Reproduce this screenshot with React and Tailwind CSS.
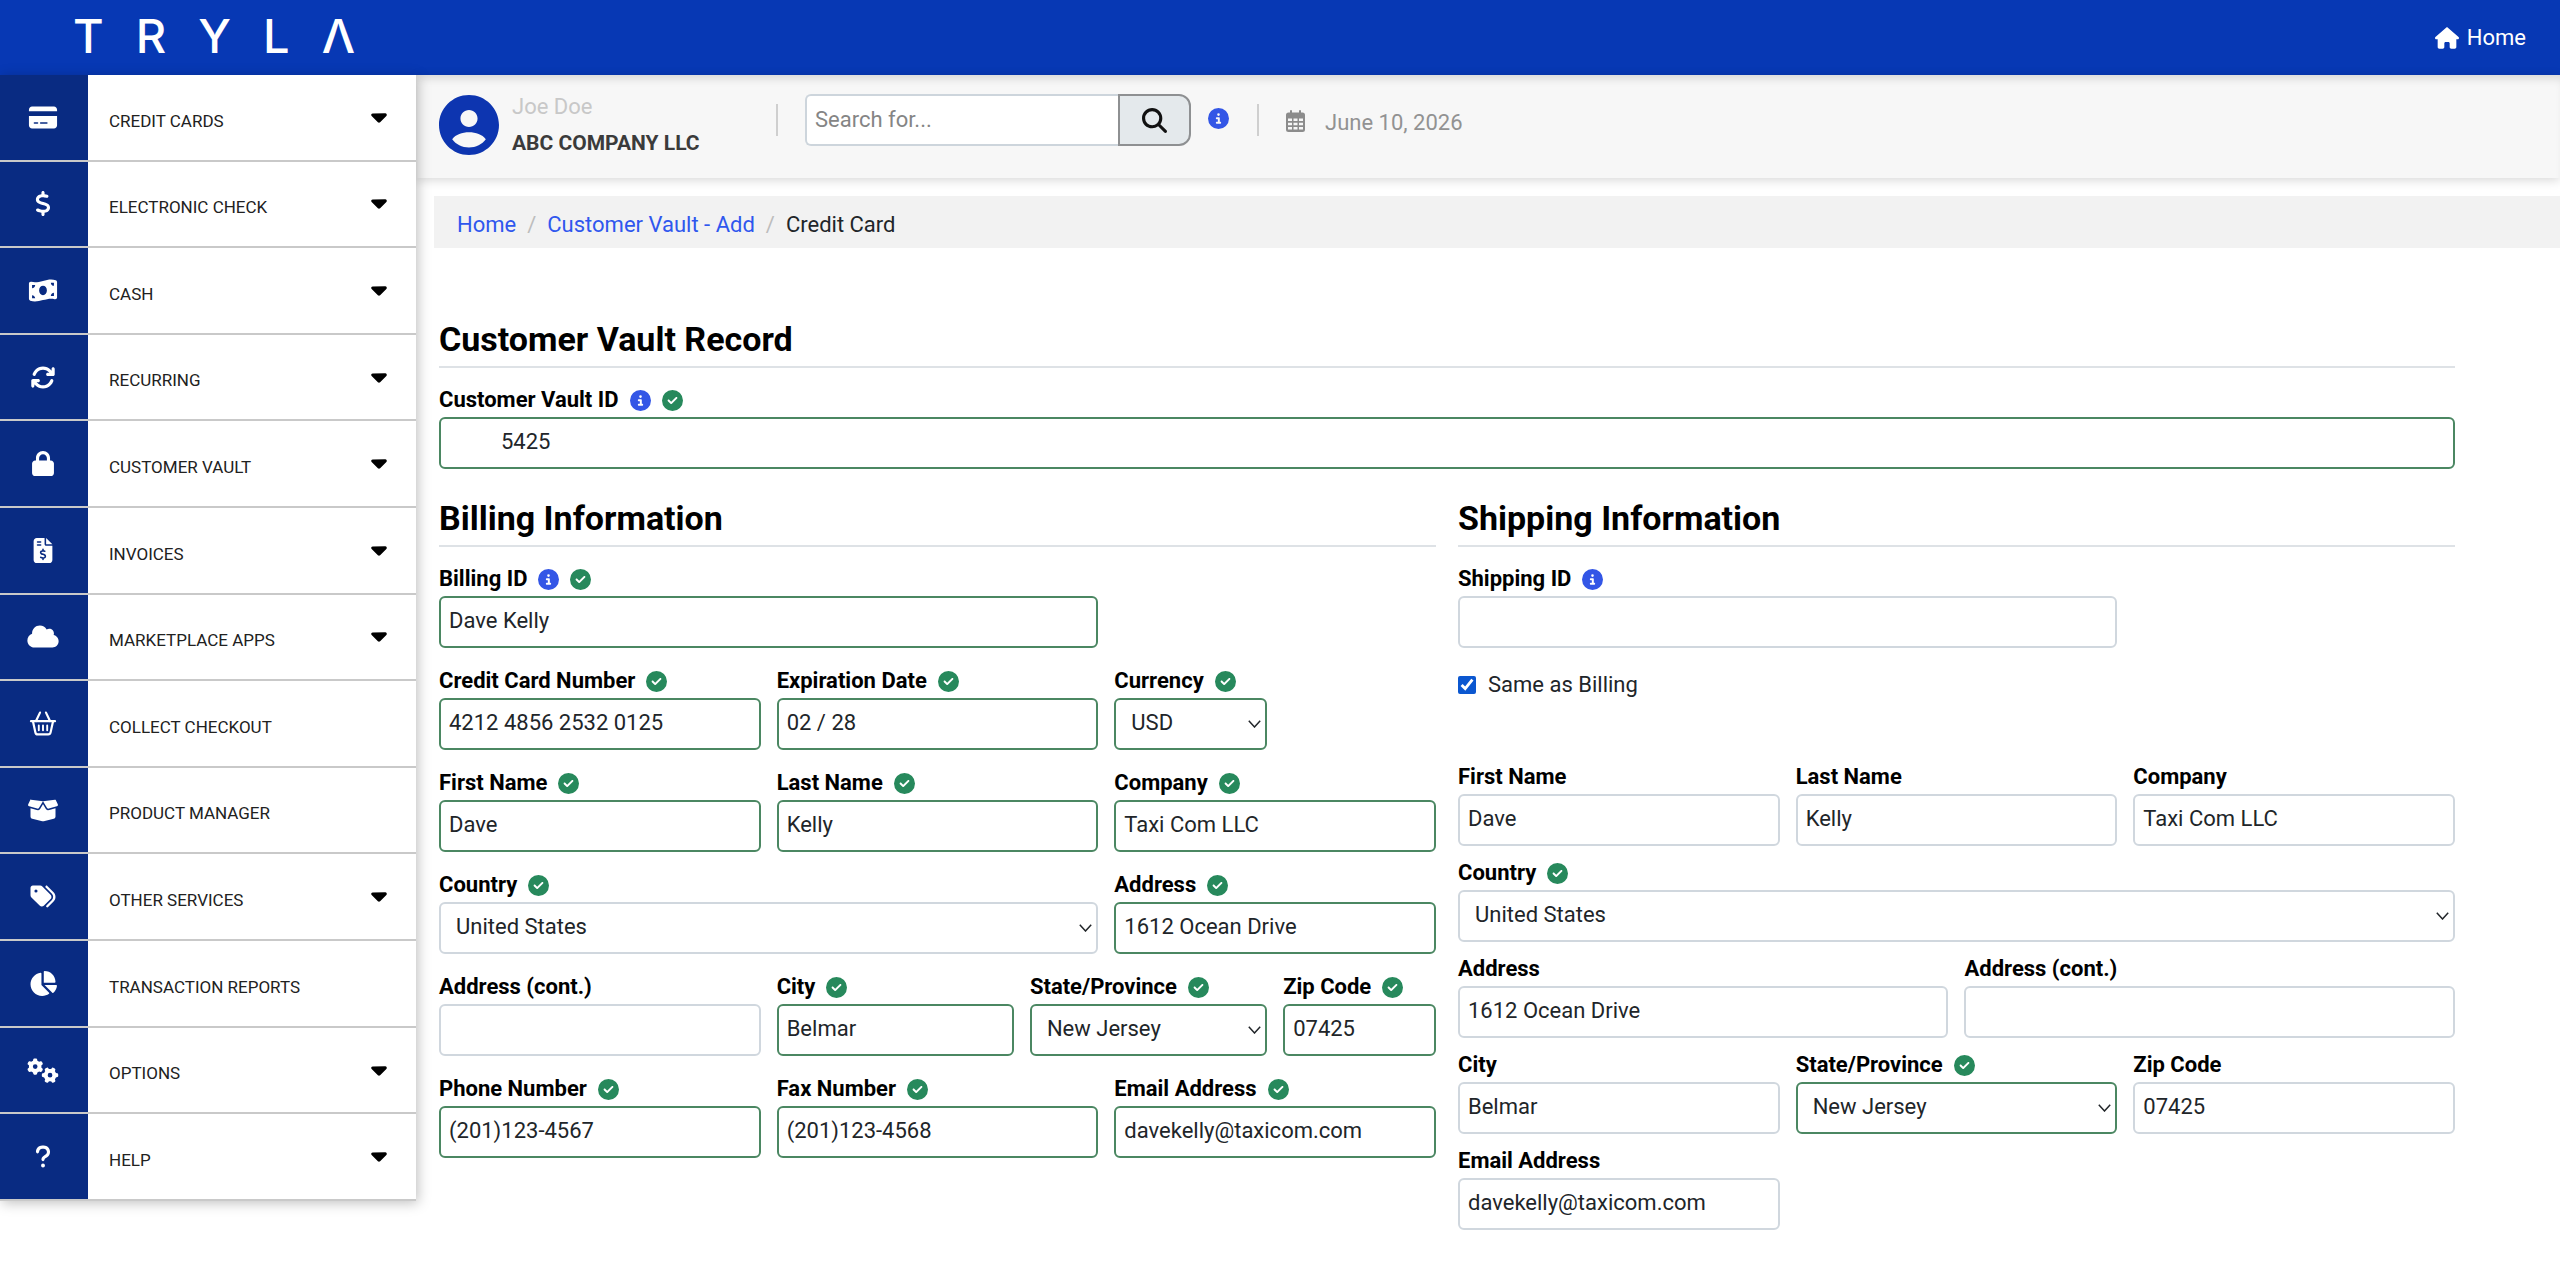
import React, { useState } from 'react';
import clsx from 'clsx';
import {
    FaArrowsRotate,
    FaBoxOpen,
    FaCaretDown,
    FaChartPie,
    FaCircleCheck,
    FaCircleInfo,
    FaCloud,
    FaCreditCard,
    FaDollarSign,
    FaFileInvoiceDollar,
    FaGears,
    FaHouse,
    FaLock,
    FaMagnifyingGlass,
    FaMoneyBillWave,
    FaQuestion,
    FaTags,
} from 'react-icons/fa6';

function BasketIcon({ className }) {
    return (
        <svg viewBox="0 0 28 25" fill="none" stroke="currentColor" strokeLinecap="round" strokeLinejoin="round" className={className}>
            <path d="M2 10.2h24" strokeWidth="2.2" />
            <path d="M7 10 11 1.6M21 10 17 1.6" strokeWidth="2.2" />
            <path d="M4 10.5 6.4 21.4Q6.8 23.4 8.8 23.4H19.2Q21.2 23.4 21.6 21.4L24 10.5" strokeWidth="2.2" />
            <path d="M9.8 14.4v4.8M14 14.4v4.8M18.2 14.4v4.8" strokeWidth="1.9" />
        </svg>
    );
}

function CalendarIcon({ className }) {
    return (
        <svg viewBox="0 0 19 22" width="19" height="22" fill="currentColor" className={className}>
            <rect x="4" y="0" width="2" height="5" rx="1" />
            <rect x="13" y="0" width="2" height="5" rx="1" />
            <path fillRule="evenodd" d="M2.5 2.5h14A2.5 2.5 0 0 1 19 5v14.500a2.500 2.500 0 0 1-2.500 2.500h-14A2.500 2.500 0 0 1 0 19.500V5a2.500 2.500 0 0 1 2.500-2.500zM2 8.500v2.500h4V8.500zM7.500 8.500v2.500h4V8.500zM13 8.500v2.500h4V8.500zM2 12.800v2.500h4v-2.500zM7.500 12.800v2.500h4v-2.500zM13 12.800v2.500h4v-2.500zM2 17.100v2.500h4v-2.500zM7.500 17.100v2.500h4v-2.500zM13 17.100v2.500h4v-2.500z" />
        </svg>
    );
}

function Avatar() {
    return (
        <svg viewBox="2 2 20 20" className="w-15 h-15 shrink-0 text-[#0d35b0]" fill="currentColor">
            <path d="M12 2C6.480 2 2 6.480 2 12s4.480 10 10 10 10-4.480 10-10S17.520 2 12 2zm0 5c1.600 0 2.850 1.300 2.850 2.850S13.600 12.700 12 12.700 9.150 11.400 9.150 9.850 10.400 7 12 7zm0 12.500c-2.300 0-4.400-1.050-5.600-2.750 1.200-1.650 3.300-2.350 5.600-2.350s4.400.7 5.600 2.350c-1.200 1.700-3.300 2.750-5.600 2.750z" />
        </svg>
    );
}

const MENU = [
    { label: 'CREDIT CARDS', icon: FaCreditCard, open: true },
    { label: 'ELECTRONIC CHECK', icon: FaDollarSign, open: true },
    { label: 'CASH', icon: FaMoneyBillWave, open: true },
    { label: 'RECURRING', icon: FaArrowsRotate, open: true },
    { label: 'CUSTOMER VAULT', icon: FaLock, open: true },
    { label: 'INVOICES', icon: FaFileInvoiceDollar, open: true },
    { label: 'MARKETPLACE APPS', icon: FaCloud, open: true },
    { label: 'COLLECT CHECKOUT', icon: BasketIcon },
    { label: 'PRODUCT MANAGER', icon: FaBoxOpen },
    { label: 'OTHER SERVICES', icon: FaTags, open: true },
    { label: 'TRANSACTION REPORTS', icon: FaChartPie },
    { label: 'OPTIONS', icon: FaGears, open: true },
    { label: 'HELP', icon: FaQuestion, open: true },
];

const SPANS = {
    2: 'col-span-2',
    3: 'col-span-3',
    4: 'col-span-4',
    6: 'col-span-6',
    8: 'col-span-8',
    12: 'col-span-12',
};

function Field({ id, label, value = '', span = 4, info, checked, valid = checked, select, indent }) {
    const [val, setVal] = useState(value);
    const box = clsx(
        'w-full h-[52px] pb-1 rounded-md border-2 bg-white text-[22px] text-[#212529] outline-none',
        valid ? 'border-[#4b8762]' : 'border-[#d0d7de]'
    );

    return (
        <div className={SPANS[span]}>
            <div className="flex items-center gap-[11px] h-[34px]">
                <label htmlFor={id} className="font-bold text-black leading-[34px]">{label}</label>
                {info && <FaCircleInfo className="w-[21px] h-[21px] text-[#3356e6]" />}
                {checked && <FaCircleCheck className="w-[21px] h-[21px] text-[#27895c]" />}
            </div>
            {select ? (
                <div className="relative">
                    <select id={id} value={val} onChange={(e) => setVal(e.target.value)} className={clsx(box, 'appearance-none pl-[15px] pr-8')}>
                        <option>{value}</option>
                    </select>
                    <svg viewBox="0 0 13 8" className="absolute right-1.5 top-[22px] w-[13px] h-2 pointer-events-none" fill="none" stroke="#212529" strokeWidth="1.5">
                        <path d="M.8.8 6.500 7 12.200.8" />
                    </svg>
                </div>
            ) : (
                <input id={id} type="text" value={val} onChange={(e) => setVal(e.target.value)} className={clsx(box, indent ? 'pl-15' : 'pl-2')} />
            )}
        </div>
    );
}

function Heading({ children }) {
    return (
        <h2 className="text-[34px] leading-[42px] font-bold text-black pb-1.5 border-b-2 border-[#dee2e6] mb-[15px]">{children}</h2>
    );
}

function Sidebar() {
    return (
        <nav className="w-[416px] min-h-[89vh] shrink-0 self-start flex flex-col bg-white shadow-[2px_2px_12px_rgba(0,0,0,0.25)] z-10">
            {MENU.map(({ label, icon: Icon, open }) => (
                <a key={label} href="#" className="flex-1 flex items-stretch border-b-2 border-[#c9c9c9]">
                    <span className="w-22 flex items-center justify-center bg-[#092b82] text-white pr-[3px]">
                        <Icon className="w-8 h-[25px]" />
                    </span>
                    <span className="flex-1 flex items-center justify-between pl-[21px] pr-[29px]">
                        <span className="text-[17px] text-[#212121] pt-2">{label}</span>
                        {open && <FaCaretDown className="w-4 h-[25px] text-black mb-0.5" />}
                    </span>
                </a>
            ))}
        </nav>
    );
}

function TopBar() {
    return (
        <header className="h-[75px] flex items-center justify-between bg-[#0738b4] pl-[73px] pr-[34px] text-white">
            <a href="#" aria-label="TRYLA" className="w-[282px] pb-1 flex justify-between font-[Inter,sans-serif] text-[47px] leading-none font-medium">
                {['T', 'R', 'Y', 'L', 'Λ'].map((c) => (
                    <span key={c}>{c}</span>
                ))}
            </a>
            <a href="#" className="flex items-center gap-2">
                <FaHouse className="w-6 h-[22px]" />
                <span>Home</span>
            </a>
        </header>
    );
}

function UserBar() {
    return (
        <div className="h-[103px] flex items-start pt-3.5 pl-[23px] bg-[#f7f7f7] shadow-[0_2px_10px_rgba(0,0,0,0.16),inset_0_8px_8px_-4px_rgba(0,0,0,0.12)]">
            <div className="w-[337px] flex items-center gap-[13px]">
                <Avatar />
                <div className="leading-9">
                    <div className="text-[#c8c8c8]">Joe Doe</div>
                    <div className="font-bold text-[#3b3b3b] text-[21px]">ABC COMPANY LLC</div>
                </div>
            </div>
            <div className="flex items-center pt-[5px]">
                <div className="w-0.5 h-8 bg-[#cfcfcf]" />
                <form className="flex ml-[27px] h-[52px]" onSubmit={(e) => e.preventDefault()}>
                    <input
                        type="text"
                        aria-label="Search"
                        placeholder="Search for..."
                        className="w-[313px] pl-2 pb-0.5 rounded-l-md border-2 border-r-0 border-[#cdd5dc] bg-white placeholder:text-[#858585] outline-none"
                    />
                    <button type="submit" aria-label="Search" className="w-[73px] flex items-center justify-center rounded-r-xl border-2 border-[#8e9092] bg-[#e4e9ec] text-[#111]">
                        <FaMagnifyingGlass className="text-[25px]" />
                    </button>
                </form>
                <FaCircleInfo className="w-[21px] h-[21px] ml-[17px] mb-1 text-[#3356e6]" />
                <div className="w-0.5 h-8 ml-[28px] bg-[#cfcfcf]" />
                <CalendarIcon className="ml-[27px] mt-0.5 text-[#8c8c8c]" />
                <span className="ml-5 pt-1 text-[#929292]">June 10, 2026</span>
            </div>
        </div>
    );
}

function Breadcrumb() {
    return (
        <nav className="mt-[18px] ml-[18px] h-[52px] pl-[23px] pt-1 flex items-center gap-[11px] bg-[#f2f2f2]">
            <a href="#" className="text-[#2f57ee]">Home</a>
            <span className="text-[#bdbdbd]">/</span>
            <a href="#" className="text-[#2f57ee]">Customer Vault - Add</a>
            <span className="text-[#bdbdbd]">/</span>
            <span className="text-[#212529]">Credit Card</span>
        </nav>
    );
}

export default function App() {
    const [same, setSame] = useState(true);

    return (
        <div className="min-h-screen bg-white font-[Roboto,sans-serif] text-[22px]">
            <TopBar />
            <div className="flex">
                <Sidebar />
                <main className="flex-1 min-w-0">
                    <UserBar />
                    <Breadcrumb />
                    <div className="pl-[23px] pr-[105px] pt-[70px]">
                        <Heading>Customer Vault Record</Heading>
                        <div className="grid grid-cols-12">
                            <Field id="vault-id" label="Customer Vault ID" value="5425" span={12} info checked indent />
                        </div>
                        <div className="grid grid-cols-2 gap-x-[22px] mt-7">
                            <section>
                                <Heading>Billing Information</Heading>
                                <div className="grid grid-cols-12 gap-4">
                                    <Field id="billing-id" label="Billing ID" value="Dave Kelly" span={8} info checked />
                                    <div className="col-span-4" />
                                    <Field id="card" label="Credit Card Number" value="4212 4856 2532 0125" checked />
                                    <Field id="exp" label="Expiration Date" value="02 / 28" checked />
                                    <Field id="currency" label="Currency" value="USD" span={2} select checked />
                                    <div className="col-span-2" />
                                    <Field id="b-first" label="First Name" value="Dave" checked />
                                    <Field id="b-last" label="Last Name" value="Kelly" checked />
                                    <Field id="b-company" label="Company" value="Taxi Com LLC" checked />
                                    <Field id="b-country" label="Country" value="United States" span={8} select checked valid={false} />
                                    <Field id="b-address" label="Address" value="1612 Ocean Drive" checked />
                                    <Field id="b-address2" label="Address (cont.)" />
                                    <Field id="b-city" label="City" value="Belmar" span={3} checked />
                                    <Field id="b-state" label="State/Province" value="New Jersey" span={3} select checked />
                                    <Field id="b-zip" label="Zip Code" value="07425" span={2} checked />
                                    <Field id="b-phone" label="Phone Number" value="(201)123-4567" checked />
                                    <Field id="b-fax" label="Fax Number" value="(201)123-4568" checked />
                                    <Field id="b-email" label="Email Address" value="davekelly@taxicom.com" checked />
                                </div>
                            </section>
                            <section>
                                <Heading>Shipping Information</Heading>
                                <div className="grid grid-cols-12 gap-4">
                                    <Field id="shipping-id" label="Shipping ID" span={8} info />
                                </div>
                                <div className="flex items-center gap-3 mt-5 mb-[58px]">
                                    <input id="same" type="checkbox" checked={same} onChange={() => setSame(!same)} className="w-[18px] h-[18px] accent-[#0b57d0]" />
                                    <label htmlFor="same" className="leading-[34px] text-[#212529]">Same as Billing</label>
                                </div>
                                <div className="grid grid-cols-12 gap-x-4 gap-y-2.5">
                                    <Field id="s-first" label="First Name" value="Dave" />
                                    <Field id="s-last" label="Last Name" value="Kelly" />
                                    <Field id="s-company" label="Company" value="Taxi Com LLC" />
                                    <Field id="s-country" label="Country" value="United States" span={12} select checked valid={false} />
                                    <Field id="s-address" label="Address" value="1612 Ocean Drive" span={6} />
                                    <Field id="s-address2" label="Address (cont.)" span={6} />
                                    <Field id="s-city" label="City" value="Belmar" />
                                    <Field id="s-state" label="State/Province" value="New Jersey" select checked />
                                    <Field id="s-zip" label="Zip Code" value="07425" />
                                    <Field id="s-email" label="Email Address" value="davekelly@taxicom.com" />
                                </div>
                            </section>
                        </div>
                    </div>
                </main>
            </div>
        </div>
    );
}
